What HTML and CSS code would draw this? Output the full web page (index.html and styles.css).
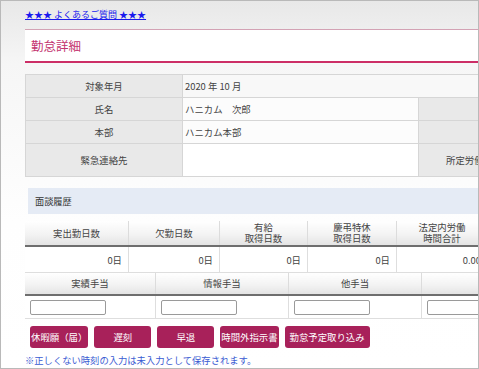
FILE: index.html
```html
<!DOCTYPE html>
<html lang="ja">
<head>
<meta charset="utf-8">
<title>勤怠詳細</title>
<link rel="stylesheet" href="styles.css">
</head>
<body>
<div class="frame">
  <div class="page">
    <div class="faq-row"><a class="faq" href="#">★★★ よくあるご質問 ★★★</a></div>
    <div class="title-box"><h1 class="title">勤怠詳細</h1></div>

    <table class="info">
      <tr>
        <th class="lbl">対象年月</th>
        <td class="val val-first" colspan="3">2020 年 10 月</td>
      </tr>
      <tr>
        <th class="lbl">氏名</th>
        <td class="val">ハニカム　次郎</td>
        <th class="lbl lbl2"></th>
        <td class="val"></td>
      </tr>
      <tr>
        <th class="lbl">本部</th>
        <td class="val">ハニカム本部</td>
        <th class="lbl lbl2"></th>
        <td class="val"></td>
      </tr>
      <tr class="tall">
        <th class="lbl">緊急連絡先</th>
        <td class="val val-white"></td>
        <th class="lbl lbl2">所定労働時間</th>
        <td class="val val-white"></td>
      </tr>
    </table>

    <div class="section-bar">面談履歴</div>

    <table class="stats">
      <tr class="head">
        <th class="c1">実出勤日数</th>
        <th class="c2">欠勤日数</th>
        <th class="c3">有給<br>取得日数</th>
        <th class="c4">慶弔特休<br>取得日数</th>
        <th class="c5">法定内労働<br>時間合計</th>
      </tr>
      <tr class="data">
        <td>0日</td>
        <td>0日</td>
        <td>0日</td>
        <td>0日</td>
        <td>0.00</td>
      </tr>
    </table>

    <table class="allow">
      <tr class="head">
        <th class="a1">実績手当</th>
        <th class="a2">情報手当</th>
        <th class="a3">他手当</th>
        <th class="a4">C</th>
      </tr>
      <tr class="inputs">
        <td><input class="field" type="text"></td>
        <td><input class="field" type="text"></td>
        <td><input class="field" type="text"></td>
        <td><input class="field" type="text"></td>
      </tr>
    </table>

    <div class="buttons">
      <button class="btn">休暇願（届）</button>
      <button class="btn">遅刻</button>
      <button class="btn">早退</button>
      <button class="btn">時間外指示書</button>
      <button class="btn btn-wide">勤怠予定取り込み</button>
    </div>

    <p class="note">※正しくない時刻の入力は未入力として保存されます。</p>
  </div>
</div>
</body>
</html>
```
FILE: styles.css
```css
html, body {
  margin: 0;
  padding: 0;
}

body {
  font-family: "Noto Sans CJK JP", "Noto Sans", sans-serif;
  color: #333;
}

.frame {
  box-sizing: border-box;
  width: 479px;
  height: 369px;
  border: 1px solid #b9b9b9;
  overflow: hidden;
  background: linear-gradient(#e8e8e8 0, #eeeeee 28px, #f6f6f6 62px, #fafafa 140px, #fefefe 220px, #ffffff 100%);
}

.page {
  width: 760px;
  padding-left: 24px;
}

.faq-row {
  height: 28px;
  padding-top: 7px;
  box-sizing: border-box;
  font-size: 9px;
  line-height: 13px;
}

.faq {
  color: #1a1aee;
  text-decoration: underline;
}

.title-box {
  background: #fff;
  border-top: 1px solid #d3a2b4;
  border-bottom: 2px solid #cc2e66;
  height: 31px;
  display: flex;
  align-items: center;
  padding-left: 6px;
}

.title {
  margin: 0;
  font-size: 12.5px;
  font-weight: normal;
  color: #c3336f;
}

.info {
  margin-top: 11px;
  border-collapse: collapse;
  font-size: 9.4px;
}

.info th,
.info td {
  border: 1px solid #d6d6d6;
  padding: 0;
  height: 22px;
  line-height: 12px;
}

.info .tall th,
.info .tall td {
  height: 32px;
}

.lbl {
  width: 156px;
  background: #e9e9e9;
  font-weight: normal;
  text-align: center;
  color: #444;
}

.lbl2 {
  width: 84px;
  text-align: left;
  padding-left: 27px !important;
}

.val {
  width: 233px;
  background: #fcfcfc;
  padding-left: 2px !important;
  color: #444;
  text-align: left;
}

.val-first {
  background: #f8f8f8;
}

.val-white {
  background: #fff;
}

.section-bar {
  margin-top: 11px;
  margin-left: 3px;
  height: 26px;
  background: #e5ebf5;
  display: flex;
  align-items: center;
  padding-left: 7px;
  font-size: 9.2px;
  color: #333;
}

.stats {
  margin-top: 7px;
  border-collapse: collapse;
  font-size: 9.4px;
}

.stats th,
.allow th {
  font-weight: normal;
  color: #444;
  background: linear-gradient(#ffffff, #f3f3f3 55%, #e4e4e4);
  border-left: 1px solid #dcdcdc;
  border-bottom: 2px solid #6e6e6e;
  padding: 0;
  text-align: center;
  line-height: 11px;
}

.stats th:first-child,
.allow th:first-child {
  border-left: none;
}

.stats .head th {
  height: 24px;
}

.c1 { width: 103px; }
.c2 { width: 90px; }
.c3 { width: 87px; }
.c4 { width: 88px; }
.c5 { width: 90px; }

.stats .data td {
  height: 25px;
  background: #fff;
  text-align: right;
  padding: 0 6px 0 0;
  border-left: 1px solid #dedede;
  border-bottom: 1px solid #dedede;
  color: #444;
}

.stats .data td:first-child {
  border-left: none;
}

.allow {
  border-collapse: collapse;
  font-size: 9.4px;
}

.allow .head th {
  height: 21px;
}

.a1 { width: 130px; }
.a2 { width: 132px; }
.a3 { width: 132px; }
.a4 { width: 132px; }

.allow .inputs td {
  height: 22px;
  background: #fff;
  padding: 0 0 0 5px;
  border-left: 1px solid #dedede;
  border-bottom: 1px solid #dedede;
  vertical-align: middle;
}

.allow .inputs td:first-child {
  border-left: none;
}

.field {
  display: block;
  box-sizing: border-box;
  width: 76px;
  height: 15px;
  margin: 0;
  padding: 0 2px;
  border: 1px solid #9a9a9a;
  border-radius: 2px;
  background: #fff;
  font-size: 9px;
}

.buttons {
  display: flex;
  gap: 6px;
  margin-top: 7px;
  padding-left: 5px;
}

.btn {
  box-sizing: border-box;
  height: 22px;
  min-width: 57px;
  padding: 0 1px;
  border: none;
  border-radius: 3px;
  background: #a8215a;
  color: #fff;
  font-family: "Noto Sans CJK JP", "Noto Sans", sans-serif;
  font-size: 9.4px;
  line-height: 22px;
}

.btn-wide {
  padding: 0 5px;
}

.note {
  margin: 6px 0 0 0;
  font-size: 9.3px;
  line-height: 12px;
  color: #3a5bd2;
}
```
